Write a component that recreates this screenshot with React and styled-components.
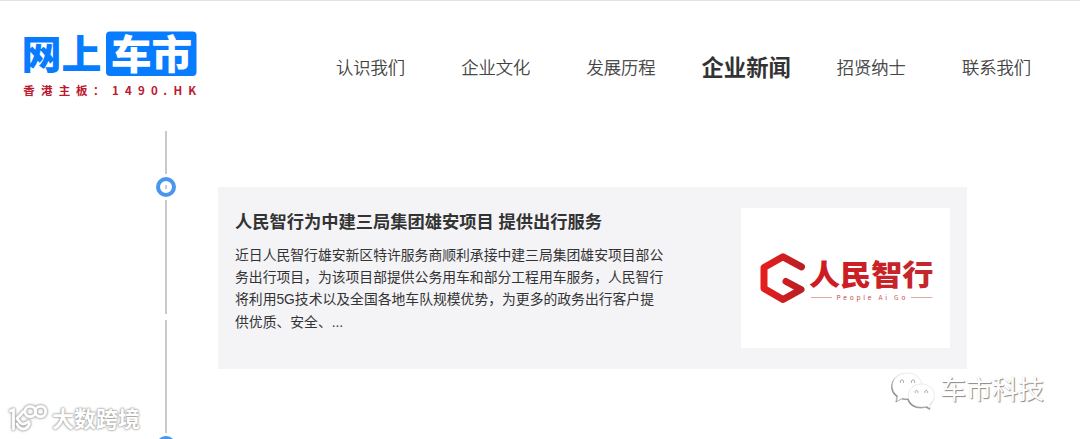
import React from 'react';
import styled, { createGlobalStyle } from 'styled-components';

const GlobalStyle = createGlobalStyle`
  * {
    box-sizing: border-box;
  }

  body {
    margin: 0;
    background: #fff;
    color: #333;
    font-family: "Liberation Sans", "Noto Sans CJK SC", sans-serif;
    overflow: hidden;
  }

  svg {
    overflow: visible;
  }
`;

const Page = styled.div`
  position: relative;
  width: 1080px;
  height: 439px;
  overflow: hidden;
  border-top: 1px solid #e2e2e2;
`;

const Header = styled.header`
  display: flex;
  align-items: flex-start;
  height: 130px;
  padding: 27px 0 0 20px;
`;

const Nav = styled.nav`
  display: flex;
  margin: 18px 0 0 98px;
`;

const NavItem = styled.a`
  display: flex;
  justify-content: center;
  align-items: center;
  width: 125.2px;
  height: 40px;
  color: #333;
  font-size: ${({ $active }) => ($active ? '22.3px' : '17.3px')};
  font-weight: ${({ $active }) => ($active ? 700 : 300)};
  -webkit-text-stroke: ${({ $active }) => ($active ? '0' : '0.25px #333')};
  white-space: nowrap;
`;

const Main = styled.main`
  display: flex;
  align-items: flex-start;
`;

const Timeline = styled.div`
  display: flex;
  flex-direction: column;
  align-items: center;
  width: 20px;
  margin-left: 156px;
`;

const Line = styled.span`
  flex: none;
  width: 2px;
  height: ${({ $height }) => $height}px;
  margin-bottom: ${({ $gap = 3 }) => $gap}px;
  background: #c9c9cb;
`;

const Dot = styled.span`
  display: flex;
  flex: none;
  justify-content: center;
  align-items: center;
  width: 20px;
  height: 20px;
  margin-bottom: 3px;
  border: 4px solid #4a96ee;
  border-radius: 50%;

  &::after {
    content: '';
    width: 2px;
    height: 4px;
    background: #c9c9cb;
  }
`;

const Card = styled.article`
  display: flex;
  justify-content: space-between;
  width: 749px;
  height: 182px;
  margin: 56px 0 0 42px;
  padding: 21px 17px;
  background: #f4f4f7;
`;

const CardText = styled.div`
  width: 440px;
`;

const CardTitle = styled.h3`
  margin: 0;
  font-size: 17.25px;
  font-weight: 700;
  line-height: 28px;
  white-space: nowrap;
`;

const Summary = styled.p`
  margin: 7.5px 0 0;
  font-size: 13.82px;
  line-height: 22.4px;
  white-space: nowrap;
`;

const SummaryLine = styled.span`
  display: block;
`;

const CardImage = styled.div`
  width: 209px;
  height: 140px;
  background: #fff;
`;

const Watermark = styled.div`
  position: absolute;
  display: flex;
  align-items: center;
`;

const AccountMark = styled(Watermark)`
  left: 888px;
  top: 367px;
`;

const AccountName = styled.span`
  margin-left: 4px;
  color: #fff;
  font-size: 26px;
  font-weight: 400;
  line-height: 44px;
  text-shadow: 1px 1px 1px #888, 0 0 1px #ddd;
`;

const SiteMark = styled(Watermark)`
  left: 5px;
  top: 401px;
`;

const SiteName = styled.span`
  color: #fff;
  font-size: 22px;
  font-weight: 700;
  line-height: 36px;
  text-shadow: 0 0 2px #999, 0 0 2px #aaa, 0 0 3px #ccc;
`;

const navItems = ['认识我们', '企业文化', '发展历程', '企业新闻', '招贤纳士', '联系我们'];

const summary = [
  '近日人民智行雄安新区特许服务商顺利承接中建三局集团雄安项目部公',
  '务出行项目，为该项目部提供公务用车和部分工程用车服务，人民智行',
  '将利用5G技术以及全国各地车队规模优势，为更多的政务出行客户提',
  '供优质、安全、...',
];

const cjk = '"Noto Sans CJK SC", sans-serif';

const SiteLogo = () => (
  <svg width="190" height="76" viewBox="20 28 190 76" fontFamily={cjk}>
    <rect x="106" y="31.5" width="90.5" height="44.5" rx="4" fill="#087cff" />
    <g fontSize="40" fontWeight="900">
      <text x="21.5" y="69" fill="#087cff" textLength="80" lengthAdjust="spacingAndGlyphs">网上</text>
      <text x="111" y="68.5" fill="#fff" textLength="81" lengthAdjust="spacingAndGlyphs">车市</text>
    </g>
    <g fill="#bd1830" fontSize="11.5" fontWeight="700">
      <text y="94.5" x="23.2 41 58.7 76 93">香港主板：</text>
      <text y="94.5" x="112 125 138 151 163.3 173.5 188.2">1490.HK</text>
    </g>
  </svg>
);

const PartnerLogo = () => (
  <svg width="209" height="140" viewBox="741 208 209 140" fontFamily={cjk}>
    <defs>
      <linearGradient id="mark" x1="0" y1="0" x2="1" y2="0">
        <stop offset="0" stopColor="#e51d1d" />
        <stop offset="1" stopColor="#b91f24" />
      </linearGradient>
      <linearGradient id="name" x1="0" y1="0" x2="1" y2="0">
        <stop offset="0" stopColor="#cf1a20" />
        <stop offset="1" stopColor="#c3282c" />
      </linearGradient>
    </defs>
    <path
      d="M801.5 266.8L783 256.8L764 267.5V288.5L783 299.5L801 289.5L786 281.5"
      fill="none"
      stroke="url(#mark)"
      strokeWidth="7"
      strokeLinecap="round"
      strokeLinejoin="round"
    />
    <text x="809" y="285.8" fill="url(#name)" fontSize="29" fontWeight="900" textLength="124.5" lengthAdjust="spacingAndGlyphs">人民智行</text>
    <path d="M811 297.5H832M911 297.5H932.5" stroke="#e0a8a8" />
    <text x="836.5" y="300" fill="#c74a4a" fontSize="6.5" letterSpacing="2.8">People Ai Go</text>
  </svg>
);

const ChatIcon = () => (
  <svg width="48" height="44" viewBox="888 367 48 44">
    <g fill="#fff" stroke="#dedede" strokeWidth="0.6" strokeLinejoin="round" style={{ filter: 'drop-shadow(-0.2px 1px 0.5px #888)' }}>
      <path d="M907 372C898.5 372 892.5 377.5 892.5 385C892.5 389.3 894.6 392.7 898 395L896.8 400L902.5 397C904 397.4 905.5 397.5 907 397.5C915.5 397.5 922 392 922 385C922 377.5 915.5 372 907 372Z" />
      <path d="M921.5 383C914 383 908.3 388 908.3 394.7C908.3 401.4 914 406 921.5 406C923.3 406 925 405.8 926.5 405.2L930.8 407.5L929.8 403.4C932.8 401.4 934.5 398.4 934.5 394.7C934.5 388 929 383 921.5 383Z" />
    </g>
    <g fill="none" stroke="#999" strokeWidth="0.9" strokeLinecap="round">
      <path d="M900.3 381.5A1.8 1.8 0 1 1 903.5 381.5" />
      <path d="M911.5 381.5A1.8 1.8 0 1 1 914.7 381.5" />
      <path d="M915.1 391.5A1.5 1.5 0 1 1 917.9 391.5" />
      <path d="M924.9 391.5A1.5 1.5 0 1 1 927.7 391.5" />
    </g>
  </svg>
);

const HundredIcon = () => (
  <svg width="47" height="36" viewBox="5 402 47 36">
    <g
      fill="none"
      stroke="#fff"
      strokeWidth="2.8"
      strokeLinecap="round"
      strokeLinejoin="round"
      style={{ filter: 'drop-shadow(0 0 1px #999) drop-shadow(0 0 1px #bbb)' }}
    >
      <path d="M10.5 411L13.5 409.5V429" />
      <path d="M23.5 411.5L17 418.5L20.5 423Q23.5 425.5 28.5 421.5" />
      <path d="M17 424Q20 430.5 25.5 428.5Q28.5 427 29.5 423.5" />
      <circle cx="30.2" cy="411.5" r="5.2" />
      <circle cx="40.5" cy="411.5" r="5.2" />
    </g>
  </svg>
);

const App = () => {
  return (
    <>
      <GlobalStyle />
      <Page>
        <Header>
          <SiteLogo />
          <Nav>
            {navItems.map((item) => (
              <NavItem key={item} $active={item === '企业新闻'}>{item}</NavItem>
            ))}
          </Nav>
        </Header>
        <Main>
          <Timeline>
            <Line $height={43} />
            <Dot />
            <Line $height={114} $gap={6} />
            <Line $height={113} />
            <Dot />
          </Timeline>
          <Card>
            <CardText>
              <CardTitle>人民智行为中建三局集团雄安项目 提供出行服务</CardTitle>
              <Summary>
                {summary.map((line) => (
                  <SummaryLine key={line}>{line}</SummaryLine>
                ))}
              </Summary>
            </CardText>
            <CardImage>
              <PartnerLogo />
            </CardImage>
          </Card>
        </Main>
        <AccountMark>
          <ChatIcon />
          <AccountName>车市科技</AccountName>
        </AccountMark>
        <SiteMark>
          <HundredIcon />
          <SiteName>大数跨境</SiteName>
        </SiteMark>
      </Page>
    </>
  );
};

export default App;
